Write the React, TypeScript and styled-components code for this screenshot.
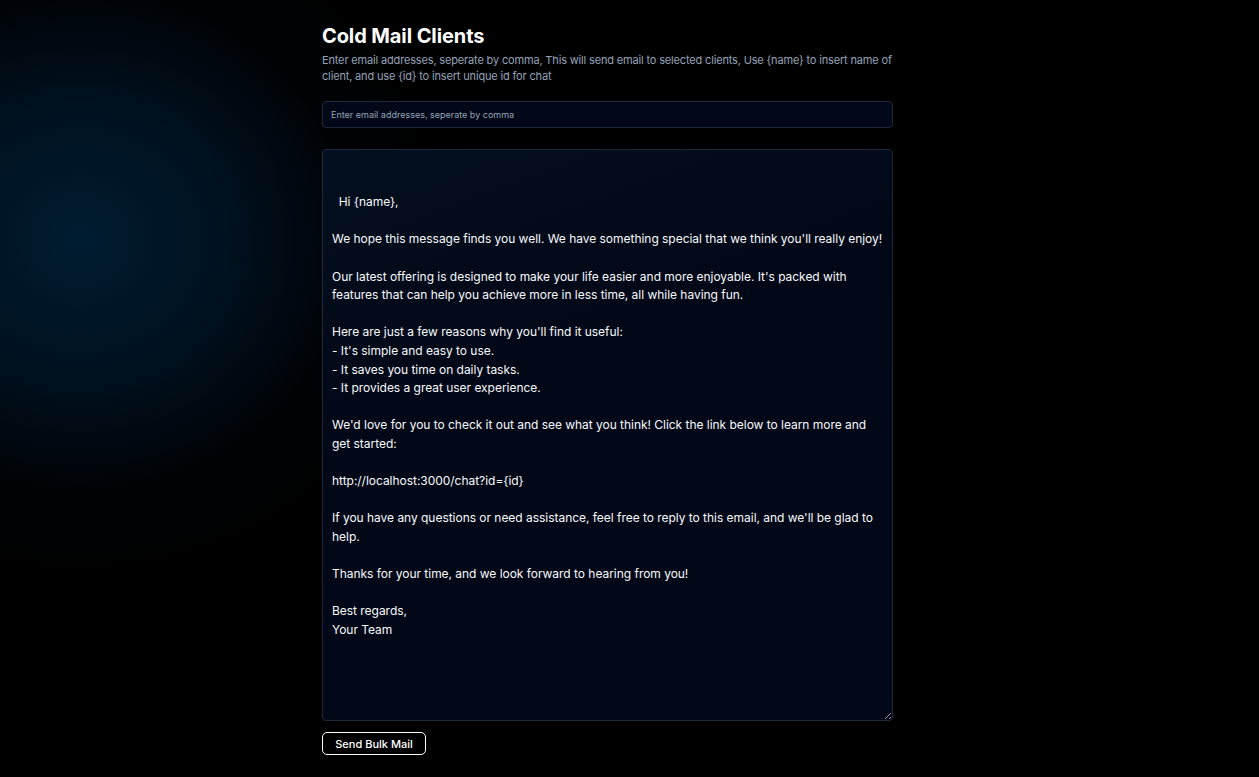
import React from "react";
import styled, { createGlobalStyle } from "styled-components";

const Global = createGlobalStyle`
  html, body { margin: 0; padding: 0; background: #000; }
  body { font-family: Inter, "Noto Sans", sans-serif; color: #f8fafc; }
  * { box-sizing: border-box; }
`;

const Page = styled.div`
  position: relative;
  min-height: 777px;
  overflow: hidden;
  background: #000;
`;

const Glow = styled.div`
  position: absolute;
  left: -280px;
  top: -90px;
  width: 720px;
  height: 660px;
  border-radius: 50%;
  background: radial-gradient(closest-side, rgba(0, 30, 52, 0.95) 0%, rgba(0, 24, 44, 0.72) 40%, rgba(0, 10, 20, 0.3) 75%, rgba(0, 0, 0, 0) 100%);
  pointer-events: none;
`;

const Main = styled.main`
  position: relative;
  width: 571px;
  margin-left: 322px;
  padding-top: 24px;
  display: flex;
  flex-direction: column;
`;

const Title = styled.h1`
  margin: 0;
  font-size: 20px;
  line-height: 24px;
  font-weight: 700;
  color: #fff;
  letter-spacing: -0.1px;
`;

const Description = styled.p`
  margin: 4px 0 0;
  font-size: 11px;
  line-height: 16px;
  letter-spacing: -0.16px;
  color: #94a3b8;
`;

const EmailInput = styled.input`
  margin-top: 17px;
  height: 27px;
  width: 100%;
  border: 1px solid #1e293b;
  border-radius: 4px;
  background: #020817;
  color: #f8fafc;
  padding: 0 8px;
  font-family: Inter, sans-serif;
  font-size: 9px;
  outline: none;
  &::placeholder { color: #94a3b8; }
`;

const Body = styled.textarea`
  margin-top: 21px;
  height: 572px;
  width: 100%;
  border: 1px solid #1e293b;
  border-radius: 4px;
  background: linear-gradient(160deg, rgba(3, 16, 32, 0.95) 0%, rgba(2, 8, 23, 0.98) 35%, #020817 100%);
  color: #f8fafc;
  padding: 6px 8px 8px 9px;
  font-family: Inter, sans-serif;
  font-size: 12px;
  line-height: 18.6px;
  letter-spacing: -0.03px;
  resize: vertical;
  outline: none;
`;

const SendButton = styled.button`
  margin-top: 11px;
  align-self: flex-start;
  height: 23px;
  width: 104px;
  border: 1px solid #fff;
  border-radius: 5px;
  background: #000;
  color: #fff;
  font-family: Inter, sans-serif;
  font-size: 11px;
  font-weight: 500;
  cursor: pointer;
`;

const template = `

  Hi {name},

We hope this message finds you well. We have something special that we think you'll really enjoy!

Our latest offering is designed to make your life easier and more enjoyable. It's packed with features that can help you achieve more in less time, all while having fun.

Here are just a few reasons why you'll find it useful:
- It's simple and easy to use.
- It saves you time on daily tasks.
- It provides a great user experience.

We'd love for you to check it out and see what you think! Click the link below to learn more and get started:

http://localhost:3000/chat?id={id}

If you have any questions or need assistance, feel free to reply to this email, and we'll be glad to help.

Thanks for your time, and we look forward to hearing from you!

Best regards,
Your Team`;

export default function App() {
  return (
    <Page>
      <Global />
      <Glow />
      <Main>
        <Title>Cold Mail Clients</Title>
        <Description>
          Enter email addresses, seperate by comma, This will send email to selected clients, Use {"{name}"} to insert name of client, and use {"{id}"} to insert unique id for chat
        </Description>
        <EmailInput placeholder="Enter email addresses, seperate by comma" />
        <Body defaultValue={template} />
        <SendButton>Send Bulk Mail</SendButton>
      </Main>
    </Page>
  );
}
